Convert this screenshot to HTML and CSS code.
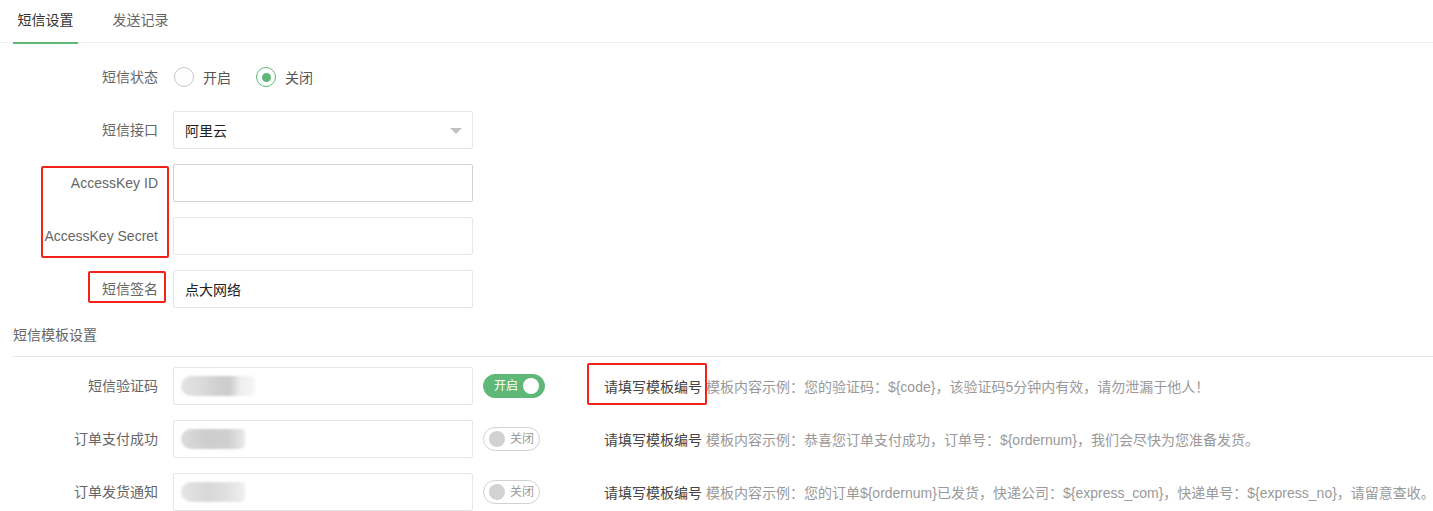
FILE: index.html
```html
<!DOCTYPE html>
<html lang="zh-CN">
<head>
<meta charset="utf-8">
<title>短信设置</title>
<link rel="stylesheet" href="styles.css">
</head>
<body>
<div class="tabs">
  <ul class="tab-title">
    <li class="tab active">短信设置</li>
    <li class="tab">发送记录</li>
  </ul>
</div>
<form class="form">
  <div class="item">
    <label class="label">短信状态</label>
    <div class="field radios">
      <span class="radio"><i class="radio-icon"></i><span>开启</span></span>
      <span class="radio checked"><i class="radio-icon"></i><span>关闭</span></span>
    </div>
  </div>
  <div class="item">
    <label class="label">短信接口</label>
    <div class="field select">
      <span class="select-value">阿里云</span>
      <i class="select-arrow"></i>
    </div>
  </div>
  <div class="item">
    <label class="label">AccessKey ID</label>
    <div class="field input hover"></div>
  </div>
  <div class="item">
    <label class="label">AccessKey Secret</label>
    <div class="field input"></div>
  </div>
  <div class="item">
    <label class="label">短信签名</label>
    <div class="field input"><span class="value">点大网络</span></div>
  </div>

  <div class="section-title">短信模板设置</div>

  <div class="item">
    <label class="label">短信验证码</label>
    <div class="field input"><span class="blur b1"></span></div>
    <div class="switch-wrap"><span class="switch on"><em>开启</em><i></i></span></div>
    <div class="desc"><span class="desc-key">请填写模板编号</span> 模板内容示例：您的验证码：${code}，该验证码5分钟内有效，请勿泄漏于他人！</div>
  </div>
  <div class="item">
    <label class="label">订单支付成功</label>
    <div class="field input"><span class="blur b2"></span></div>
    <div class="switch-wrap"><span class="switch"><i></i><em>关闭</em></span></div>
    <div class="desc"><span class="desc-key">请填写模板编号</span> 模板内容示例：恭喜您订单支付成功，订单号：${ordernum}，我们会尽快为您准备发货。</div>
  </div>
  <div class="item">
    <label class="label">订单发货通知</label>
    <div class="field input"><span class="blur b3"></span></div>
    <div class="switch-wrap"><span class="switch"><i></i><em>关闭</em></span></div>
    <div class="desc"><span class="desc-key">请填写模板编号</span> 模板内容示例：您的订单${ordernum}已发货，快递公司：${express_com}，快递单号：${express_no}，请留意查收。</div>
  </div>

  <span class="mark mark-keys"></span>
  <span class="mark mark-sign"></span>
  <span class="mark mark-tpl"></span>
</form>
</body>
</html>
```
FILE: styles.css
```css
* { box-sizing: border-box; }
html, body { margin: 0; padding: 0; background: #fff; }
body {
  font-family: "Liberation Sans", "Noto Sans CJK SC", sans-serif;
  font-size: 14px;
  color: #333;
  overflow: hidden;
}

.tab-title {
  list-style: none;
  margin: 0;
  padding: 0 0 0 13px;
  height: 43px;
  border-bottom: 1px solid #f0f0f0;
  display: flex;
}
.tab {
  position: relative;
  width: 65px;
  margin-right: 30px;
  line-height: 40px;
  text-align: center;
  color: #666;
  white-space: nowrap;
}
.tab.active { color: #333; }
.tab.active::after {
  content: "";
  position: absolute;
  left: 0;
  right: 0;
  bottom: -2px;
  height: 2px;
  background: #5fb878;
}

.form {
  position: relative;
  padding: 15px 0 0 13px;
  margin: 0;
}
.item {
  display: flex;
  align-items: center;
  height: 38px;
  margin-bottom: 15px;
}
.label {
  width: 160px;
  flex: none;
  padding-right: 15px;
  text-align: right;
  color: #666;
  line-height: 20px;
  white-space: nowrap;
}
.field {
  width: 300px;
  height: 38px;
  flex: none;
  position: relative;
}
.input, .select {
  border: 1px solid #e6e6e6;
  border-radius: 2px;
  background: #fff;
  display: flex;
  align-items: center;
  padding-left: 11px;
}
.input.hover { border-color: #d2d2d2; }
.value, .select-value { color: #222; }

.radios { display: flex; align-items: center; padding-left: 1px; }
.radio { display: flex; align-items: center; margin-right: 25px; color: #555; }
.radio-icon {
  width: 20px;
  height: 20px;
  border: 1.5px solid #c6c6c6;
  border-radius: 50%;
  margin-right: 9px;
  display: flex;
  align-items: center;
  justify-content: center;
}
.radio.checked .radio-icon { border-color: #5fb878; }
.radio.checked .radio-icon::after {
  content: "";
  width: 9px;
  height: 9px;
  border-radius: 50%;
  background: #5fb878;
}

.select-arrow {
  position: absolute;
  right: 10px;
  top: 16px;
  width: 0;
  height: 0;
  border-left: 6px solid transparent;
  border-right: 6px solid transparent;
  border-top: 6px solid #c2c2c2;
}

.section-title {
  color: #666;
  line-height: 20px;
  padding: 2px 0 11px;
  border-bottom: 1px solid #e8e8e8;
  margin: 0 0 10px -1px;
  padding-left: 1px;
}

.switch-wrap {
  width: 131px;
  flex: none;
  padding-left: 10px;
  display: flex;
  align-items: center;
}
.switch {
  display: flex;
  align-items: center;
  height: 24px;
  padding: 0 5px;
  border: 1px solid #d2d2d2;
  border-radius: 20px;
  background: #fff;
}
.switch em {
  font-style: normal;
  font-size: 12px;
  color: #999;
  width: 24px;
  line-height: 22px;
}
.switch i {
  width: 16px;
  height: 16px;
  border-radius: 50%;
  background: #d2d2d2;
  margin-right: 5px;
}
.switch.on {
  background: #5fb878;
  border-color: #5fb878;
}
.switch.on em { color: #fff; margin-left: 5px; margin-right: 5px; }
.switch.on i { background: #fff; margin-right: 0; }

.desc {
  white-space: nowrap;
  color: #999;
  font-size: 14px;
}
.desc-key { color: #444; }

.blur {
  display: block;
  height: 20px;
  margin-left: -4px;
  border-radius: 10px 3px 5px 10px;
  filter: blur(1.2px);
}
.b1 { width: 74px; background: linear-gradient(90deg, #e4e4e4 0%, #dadada 30%, #d0d0d0 50%, #cccccc 65%, #eceef0 80%, #f6f6f6 100%); }
.b2 { width: 64px; background: linear-gradient(90deg, #dcdcdc 0%, #cdcdcd 40%, #d0d0d0 75%, #ebebeb 100%); }
.b3 { width: 64px; background: linear-gradient(90deg, #e6e6e6 0%, #d8d8d8 40%, #e0e0e0 70%, #f0f0f2 100%); }

.mark {
  position: absolute;
  border: 2px solid #f5221b;
  border-radius: 2px;
  pointer-events: none;
}
.mark-keys { left: 41px; top: 123px; width: 128px; height: 92px; }
.mark-sign { left: 88px; top: 228px; width: 78px; height: 32px; }
.mark-tpl { left: 587px; top: 320px; width: 120px; height: 42px; }
```
